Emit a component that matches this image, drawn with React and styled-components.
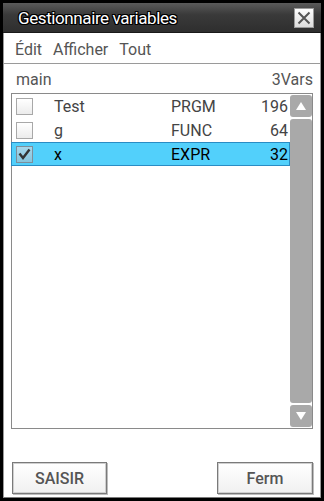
import React from 'react';
import styled, { createGlobalStyle } from 'styled-components';

const GlobalStyle = createGlobalStyle`
  html, body {
    margin: 0;
    padding: 0;
    background: #000;
  }
  body {
    font-family: Roboto, "Liberation Sans", sans-serif;
  }
`

const Window = styled.div`
  margin: 3px 3px 0 3px;
  width: 318px;
  height: 495px;
  box-sizing: border-box;
  background: #fff;
  border-left: 1px solid #9a9a9a;
  border-right: 1px solid #9a9a9a;
  border-bottom: 1px solid #7a7a7a;
  display: flex;
  flex-direction: column;
`

const TitleBar = styled.div`
  height: 29px;
  margin: 0 -1px;
  background: linear-gradient(#5a5a5a, #3a3a3a 40%, #2e2e2e);
  border-bottom: 1px solid #1a1a1a;
  display: flex;
  align-items: center;
  justify-content: space-between;
  padding: 0 7px 0 15px;
`

const Title = styled.span`
  color: #fff;
  font-size: 17px;
  letter-spacing: -0.4px;
  text-shadow: 1px 0 0 #000, -1px 0 0 #000, 0 1px 0 #000, 0 -1px 0 #000,
    1px 1px 0 #000, -1px -1px 0 #000, 1px -1px 0 #000, -1px 1px 0 #000;
`

const CloseButton = styled.div`
  width: 20px;
  height: 20px;
  box-sizing: border-box;
  border: 1px solid #9a9a9a;
  background: linear-gradient(#fdfdfd, #dcdcdc);
  display: flex;
  align-items: center;
  justify-content: center;
`

const MenuBar = styled.div`
  height: 31px;
  box-sizing: border-box;
  border-bottom: 1px solid #9a9a9a;
  display: flex;
  align-items: center;
  gap: 11px;
  padding: 2px 0 0 11px;
`

const MenuItem = styled.span`
  color: #555;
  font-size: 16px;
`

const Content = styled.div`
  flex: 1;
  display: flex;
  flex-direction: column;
  padding: 0 7px 0 7px;
`

const FolderRow = styled.div`
  height: 29px;
  display: flex;
  align-items: flex-end;
  justify-content: space-between;
  padding: 0 0 4px 5px;
  box-sizing: border-box;
  color: #555;
  font-size: 16px;
`

const ListBox = styled.div`
  height: 336px;
  box-sizing: border-box;
  border: 1px solid #8a8a8a;
  display: flex;
`

const Rows = styled.div`
  flex: 1;
  display: flex;
  flex-direction: column;
`

const Row = styled.div`
  height: 24px;
  box-sizing: border-box;
  display: grid;
  grid-template-columns: 38px 117px 1fr;
  align-items: center;
  padding: 0 1px 0 4px;
  font-size: 16px;
  color: ${p => (p.$selected ? '#000' : '#444')};
  background: ${p => (p.$selected ? '#52d0fb' : 'transparent')};
  border: 1px solid ${p => (p.$selected ? '#2a8cc4' : 'transparent')};
  margin-left: -1px;
`

const Check = styled.div`
  width: 17px;
  height: 17px;
  box-sizing: border-box;
  border: 1px solid ${p => (p.$checked ? '#7d8e9a' : '#a8a8a8')};
  background: ${p => (p.$checked ? 'linear-gradient(#a6d6ea, #86c4dc)' : 'linear-gradient(#ffffff, #ececec)')};
  display: flex;
  align-items: center;
  justify-content: center;
`

const TypeSize = styled.div`
  display: flex;
  justify-content: space-between;
`

const ScrollBar = styled.div`
  width: 22px;
  display: flex;
  flex-direction: column;
  gap: 2px;
  padding: 1px 0 1px;
`

const ScrollButton = styled.div`
  height: 22px;
  border-radius: 3px;
  background: #a9a9a9;
  display: flex;
  align-items: center;
  justify-content: center;
`

const ScrollTrack = styled.div`
  flex: 1;
  border-radius: 3px;
  background: #a9a9a9;
`

const ButtonBar = styled.div`
  flex: 1;
  display: flex;
  align-items: flex-end;
  justify-content: space-between;
  padding: 0 0 3px 1px;
`

const Button = styled.div`
  width: ${p => p.$w}px;
  height: 32px;
  box-sizing: border-box;
  border: 1px solid #7a7a7a;
  box-shadow: inset 0 0 0 1px #cfcfcf, 1px 1px 0 #bdbdbd;
  background: linear-gradient(#ffffff, #f0f0f0);
  display: flex;
  align-items: center;
  justify-content: center;
  color: #555;
  font-size: 16px;
  font-weight: 500;
`

const vars = [
  { name: 'Test', type: 'PRGM', size: 196 },
  { name: 'g', type: 'FUNC', size: 64 },
  { name: 'x', type: 'EXPR', size: 32, selected: true },
];

function Tick() {
  return (
    <svg width="13" height="12" viewBox="0 0 13 12">
      <path d="M1.5 5.5 L5 10 L11.5 1.5" fill="none" stroke="#333" strokeWidth="2.4" />
    </svg>
  );
}

export default function App() {
  return (
    <>
      <GlobalStyle />
      <Window>
        <TitleBar>
          <Title>Gestionnaire variables</Title>
          <CloseButton>
            <svg width="14" height="14" viewBox="0 0 14 14">
              <path d="M1.5 1.5 L12.5 12.5 M12.5 1.5 L1.5 12.5" stroke="#555" strokeWidth="2" />
            </svg>
          </CloseButton>
        </TitleBar>
        <MenuBar>
          <MenuItem>Édit</MenuItem>
          <MenuItem>Afficher</MenuItem>
          <MenuItem>Tout</MenuItem>
        </MenuBar>
        <Content>
          <FolderRow>
            <span>main</span>
            <span>3Vars</span>
          </FolderRow>
          <ListBox>
            <Rows>
              {vars.map(v => (
                <Row key={v.name} $selected={v.selected}>
                  <Check $checked={v.selected}>{v.selected && <Tick />}</Check>
                  <span>{v.name}</span>
                  <TypeSize>
                    <span>{v.type}</span>
                    <span>{v.size}</span>
                  </TypeSize>
                </Row>
              ))}
            </Rows>
            <ScrollBar>
              <ScrollButton>
                <svg width="10" height="8" viewBox="0 0 10 8"><path d="M5 0 L10 8 L0 8 Z" fill="#fff" /></svg>
              </ScrollButton>
              <ScrollTrack />
              <ScrollButton>
                <svg width="10" height="8" viewBox="0 0 10 8"><path d="M0 0 L10 0 L5 8 Z" fill="#fff" /></svg>
              </ScrollButton>
            </ScrollBar>
          </ListBox>
          <ButtonBar>
            <Button $w={95}>SAISIR</Button>
            <Button $w={96}>Ferm</Button>
          </ButtonBar>
        </Content>
      </Window>
    </>
  );
}
